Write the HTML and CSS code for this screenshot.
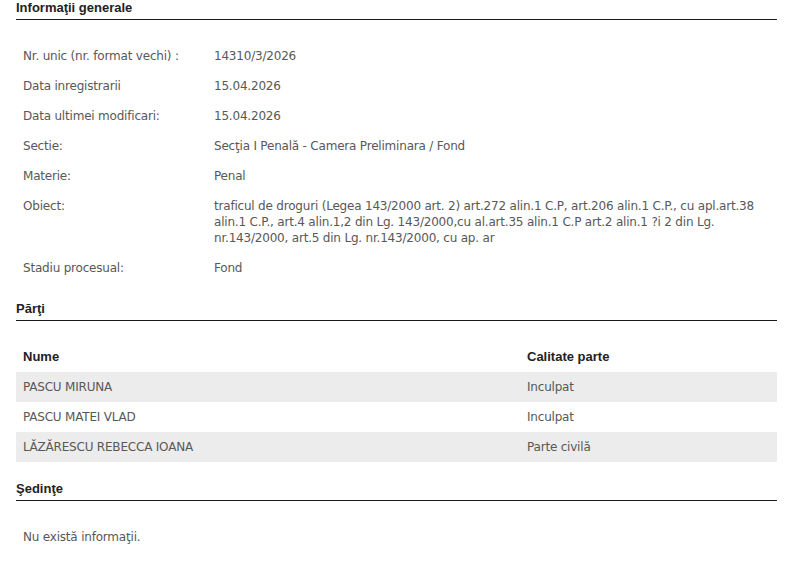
FILE: index.html
```html
<!DOCTYPE html>
<html lang="ro">
<head>
<meta charset="utf-8">
<title>Dosar</title>
<link rel="stylesheet" href="styles.css">
</head>
<body>
<div class="page">
  <section class="section">
    <h2 class="section-title">Informaţii generale</h2>
    <table class="info">
      <colgroup><col class="col-label"><col></colgroup>
      <tr><td class="label">Nr. unic (nr. format vechi) :</td><td class="value">14310/3/2026</td></tr>
      <tr><td class="label">Data inregistrarii</td><td class="value">15.04.2026</td></tr>
      <tr><td class="label">Data ultimei modificari:</td><td class="value">15.04.2026</td></tr>
      <tr><td class="label">Sectie:</td><td class="value">Secţia I Penală - Camera Preliminara / Fond</td></tr>
      <tr><td class="label">Materie:</td><td class="value">Penal</td></tr>
      <tr><td class="label">Obiect:</td><td class="value obiect">traficul de droguri (Legea 143/2000 art. 2) art.272 alin.1 C.P, art.206 alin.1 C.P., cu apl.art.38 alin.1 C.P., art.4 alin.1,2 din Lg. 143/2000,cu al.art.35 alin.1 C.P art.2 alin.1 ?i 2 din Lg. nr.143/2000, art.5 din Lg. nr.143/2000, cu ap. ar</td></tr>
      <tr><td class="label">Stadiu procesual:</td><td class="value">Fond</td></tr>
    </table>
  </section>

  <section class="section section-parti">
    <h2 class="section-title">Părţi</h2>
    <table class="parti">
      <colgroup><col class="col-nume"><col></colgroup>
      <thead>
        <tr><th>Nume</th><th>Calitate parte</th></tr>
      </thead>
      <tbody>
        <tr class="alt"><td>PASCU MIRUNA</td><td>Inculpat</td></tr>
        <tr><td>PASCU MATEI VLAD</td><td>Inculpat</td></tr>
        <tr class="alt"><td>LĂZĂRESCU REBECCA IOANA</td><td>Parte civilă</td></tr>
      </tbody>
    </table>
  </section>

  <section class="section section-sedinte">
    <h2 class="section-title">Şedinţe</h2>
    <p class="empty">Nu există informaţii.</p>
  </section>
</div>
</body>
</html>
```

FILE: styles.css
```css
html, body {
  margin: 0;
  padding: 0;
  background: #ffffff;
}

.page {
  padding: 0 16px;
  font-family: "DejaVu Sans", Verdana, sans-serif;
  font-size: 12px;
  letter-spacing: -0.2px;
  color: #585858;
}

.section {
  margin-top: 18px;
}

.section:first-child {
  margin-top: 0;
}

.section-sedinte {
  margin-top: 19px;
}

.section-title {
  margin: 0;
  font-family: "Liberation Sans", Arial, sans-serif;
  font-size: 13px;
  line-height: 16px;
  letter-spacing: 0;
  font-weight: bold;
  color: #222222;
  padding-bottom: 3px;
  border-bottom: 1px solid #1a1a1a;
}

.info {
  border-collapse: collapse;
  table-layout: fixed;
  margin-top: 21px;
  width: 100%;
}

.info .col-label {
  width: 191px;
}

.info td {
  padding: 7px 7px;
  line-height: 16px;
  vertical-align: top;
}

.parti {
  border-collapse: collapse;
  table-layout: fixed;
  margin-top: 20px;
  width: 100%;
}

.parti .col-nume {
  width: 504px;
}

.parti th {
  text-align: left;
  font-family: "Liberation Sans", Arial, sans-serif;
  font-size: 13px;
  letter-spacing: 0;
  font-weight: bold;
  color: #222222;
  padding: 8px 7px 7px;
  line-height: 16px;
}

.parti td {
  padding: 7px 7px;
  line-height: 16px;
}

.parti .alt {
  background: #ececec;
}

.empty {
  margin: 21px 0 0;
  padding: 7px 7px;
  line-height: 16px;
}
```
